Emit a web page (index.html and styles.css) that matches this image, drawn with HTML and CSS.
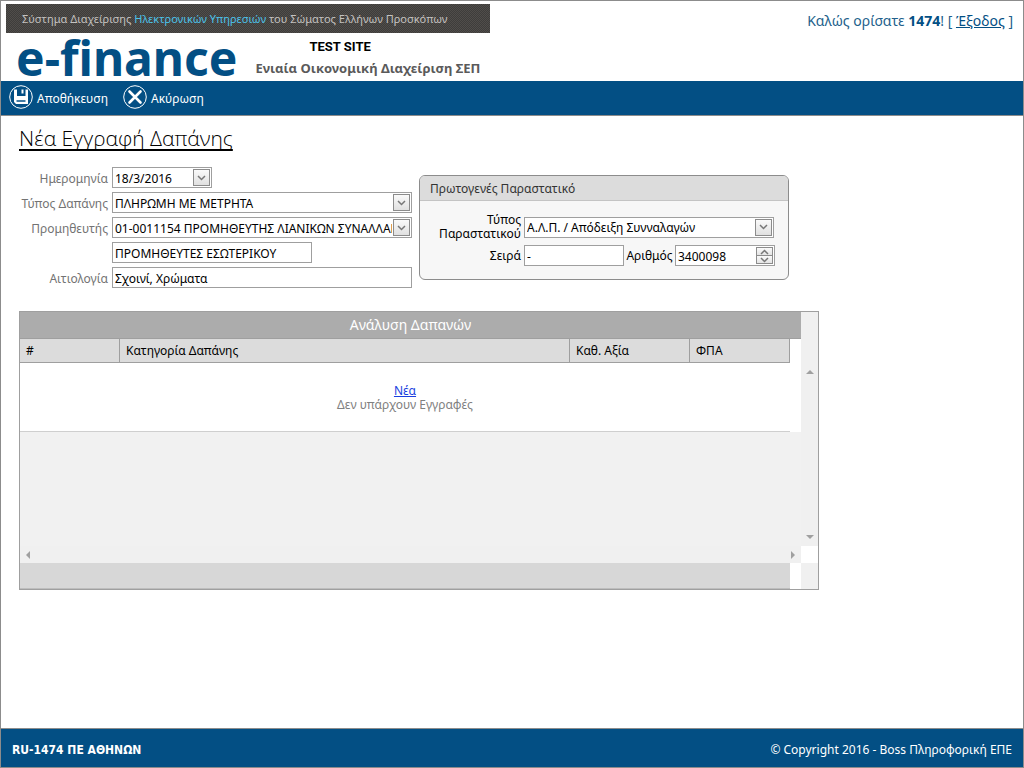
FILE: index.html
```html
<!DOCTYPE html>
<html lang="el">
<head>
<meta charset="utf-8">
<meta name="viewport" content="width=device-width, initial-scale=1">
<title>e-finance</title>
<link rel="stylesheet" href="styles.css">
</head>
<body>
<div class="app">
  <header class="header">
    <div class="brand">
      <div class="strap">Σύστημα Διαχείρισης <span class="strap-accent">Ηλεκτρονικών Υπηρεσιών</span> του Σώματος Ελλήνων Προσκόπων</div>
      <div class="brand-row">
        <div class="logo">e-finance</div>
        <div class="taglines">
          <div class="test-site">TEST SITE</div>
          <div class="tagline">Ενιαία Οικονομική Διαχείριση ΣΕΠ</div>
        </div>
      </div>
    </div>
    <div class="welcome">Καλώς ορίσατε <b>1474</b>! [ <a href="#">Έξοδος</a> ]</div>
  </header>

  <nav class="toolbar">
    <button class="tool" type="button">
      <svg class="tool-icon" viewBox="0 0 24 24"><circle cx="12" cy="12" r="11.3" fill="none" stroke="#fff"/><path d="M5 4.500h3v6.500h8.500V4.500H19V19H7l-2-2z" fill="#fff"/><path d="M12.500 4.500h2v4h-2z" fill="#fff"/><path d="M7.500 16h9" stroke="#034f84" stroke-width="1.500"/></svg>
      <span>Αποθήκευση</span>
    </button>
    <button class="tool" type="button">
      <svg class="tool-icon" viewBox="0 0 24 24"><circle cx="12" cy="12" r="11.3" fill="none" stroke="#fff"/><path d="M6.500 6.500l11 11M17.500 6.500l-11 11" fill="none" stroke="#fff" stroke-width="2.600" stroke-linecap="round"/></svg>
      <span>Ακύρωση</span>
    </button>
  </nav>

  <main class="content">
    <h1 class="title">Νέα Εγγραφή Δαπάνης</h1>
    <form class="forms">
      <div class="fields">
        <label for="date">Ημερομηνία</label>
        <div class="box box-s"><input id="date" type="text" value="18/3/2016"><button class="drop" type="button" aria-label="Ημερολόγιο"><svg viewBox="0 0 9 6"><path d="M1 1l3.500 3.500L8 1"/></svg></button></div>
        <label for="kind">Τύπος Δαπάνης</label>
        <div class="box box-l"><select id="kind"><option>ΠΛΗΡΩΜΗ ΜΕ ΜΕΤΡΗΤΑ</option></select><span class="drop"><svg viewBox="0 0 9 6"><path d="M1 1l3.500 3.500L8 1"/></svg></span></div>
        <label for="supplier">Προμηθευτής</label>
        <div class="box box-l"><select id="supplier"><option>01-0011154 ΠΡΟΜΗΘΕΥΤΗΣ ΛΙΑΝΙΚΩΝ ΣΥΝΑΛΛΑΓΩΝ</option></select><span class="drop"><svg viewBox="0 0 9 6"><path d="M1 1l3.500 3.500L8 1"/></svg></span></div>
        <div class="box box-m second"><input type="text" aria-label="Κατηγορία προμηθευτή" value="ΠΡΟΜΗΘΕΥΤΕΣ ΕΣΩΤΕΡΙΚΟΥ"></div>
        <label for="reason">Αιτιολογία</label>
        <div class="box box-l"><input id="reason" type="text" value="Σχοινί, Χρώματα"></div>
      </div>

      <section class="panel">
        <h2 class="panel-title">Πρωτογενές Παραστατικό</h2>
        <div class="panel-body">
          <label for="doc">Τύπος Παραστατικού</label>
          <div class="box wide"><select id="doc"><option>Α.Λ.Π. / Απόδειξη Συνναλαγών</option></select><span class="drop"><svg viewBox="0 0 9 6"><path d="M1 1l3.500 3.500L8 1"/></svg></span></div>
          <label for="series">Σειρά</label>
          <div class="pair">
            <div class="box box-s"><input id="series" type="text" value="-"></div>
            <label for="number">Αριθμός</label>
            <div class="box box-s"><input id="number" type="text" value="3400098"><span class="spin"><button type="button" aria-label="Αύξηση"><svg viewBox="0 0 9 6"><path d="M1 5l3.500-3.500L8 5"/></svg></button><button type="button" aria-label="Μείωση"><svg viewBox="0 0 9 6"><path d="M1 1l3.500 3.500L8 1"/></svg></button></span></div>
          </div>
        </div>
      </section>
    </form>

    <section class="grid">
      <div class="grid-title">Ανάλυση Δαπανών</div>
      <div class="grid-main">
        <table class="table">
          <thead><tr><th class="c-num">#</th><th>Κατηγορία Δαπάνης</th><th class="c-val">Καθ. Αξία</th><th class="c-vat">ΦΠΑ</th></tr></thead>
          <tbody><tr><td colspan="4"><a href="#">Νέα</a><br>Δεν υπάρχουν Εγγραφές</td></tr></tbody>
        </table>
      </div>
      <div class="hscroll"><i class="arrow left"></i><i class="arrow right"></i></div>
      <div class="grid-foot"><div class="grid-sum"></div></div>
      <div class="vscroll"><i class="arrow up"></i><i class="arrow down"></i></div>
      <div class="corner"></div>
    </section>
  </main>

  <footer class="footer"><b>RU-1474 ΠΕ ΑΘΗΝΩΝ</b><span>© Copyright 2016 - Boss Πληροφορική ΕΠΕ</span></footer>
</div>
</body>
</html>
```
FILE: styles.css
```css
* { box-sizing: border-box; }
body { margin: 0; font: 12px/14px "Noto Sans", sans-serif; color: #000; background: #fff; }
button, input, select { font: inherit; color: inherit; }
.app { min-height: 100vh; display: flex; flex-direction: column; border: 1px solid #8c8c8c; }

.header { display: flex; justify-content: space-between; height: 80px; padding: 3px 10px 0 5px; }
.brand { width: 484px; }
.strap { height: 29px; padding-left: 16px; font-size: 11px; line-height: 30px; white-space: nowrap; color: #c4c2c0; background: repeating-conic-gradient(#3e3d3b 0 25%, #504d4a 0 50%) 0 0 / 2px 2px; }
.strap-accent { color: #4cc3ea; }
.brand-row { display: flex; gap: 18px; padding-left: 10px; }
.logo { font-size: 48px; line-height: 50px; font-weight: 700; color: #034f84; }
.taglines { padding-top: 6px; white-space: nowrap; }
.test-site { padding-left: 54px; font: 700 13px/15px Roboto, sans-serif; }
.tagline { padding-top: 5px; font-size: 13px; line-height: 18px; font-weight: 700; color: #5a5a5a; }
.welcome { padding-top: 8px; font-size: 14px; line-height: 18px; color: #235f8b; }
.welcome b, .welcome a { color: #034f84; }

.toolbar { display: flex; gap: 15px; height: 35px; padding-left: 8px; background: #034f84; border-bottom: 1px solid #8c8c8c; }
.tool { display: flex; align-items: center; gap: 4px; padding: 0; border: 0; background: none; color: #fff; }
.tool span { padding-top: 1px; }
.tool-icon { width: 24px; height: 24px; margin-bottom: 2px; }

.content { flex: 1; padding: 8px 18px; }
.title { margin: 0; font: 300 21px/28px "Open Sans", sans-serif; text-decoration: underline; text-underline-offset: 3px; text-decoration-thickness: 2px; text-decoration-skip-ink: none; }
.forms { display: flex; align-items: flex-start; gap: 7px; padding-top: 15px; }
.fields { display: grid; grid-template-columns: 90px 300px; gap: 4px 3px; align-items: center; color: #737373; }
.fields label { padding: 2px 1px 0 0; text-align: right; white-space: nowrap; }
.second { grid-column: 2; }
.box { display: flex; height: 21px; color: #000; background: #fff; border: 1px solid #9f9f9f; }
.box input, .box select { flex: 1; min-width: 0; width: 0; padding: 2px 0 0 2px; border: 0; outline: 0; background: none; appearance: none; }
.box-s { width: 100px; }
.box-m { width: 200px; }
.box-l { width: 300px; }
.drop { display: flex; align-items: center; justify-content: center; width: 17px; margin: 1px; padding: 0; border: 1px solid #8c8c8c; background: linear-gradient(#fafafa, #e0e0e0); pointer-events: none; }
.drop svg, .spin svg { width: 9px; height: 6px; fill: none; stroke: #777; stroke-width: 1.5; }
.spin { display: flex; flex-direction: column; width: 17px; margin: 1px; border: 1px solid #8c8c8c; }
.spin button { flex: 1; display: flex; align-items: center; justify-content: center; min-height: 0; padding: 0; border: 0; background: linear-gradient(#fafafa, #e4e4e4); }
.spin button + button { border-top: 1px solid #8c8c8c; }

.panel { width: 370px; margin-top: 8px; border: 1px solid #8c8c8c; border-radius: 6px; background: #f7f7f7; overflow: hidden; }
.panel-title { margin: 0; padding: 1px 10px 0; font-size: 12px; font-weight: 400; line-height: 23px; color: #333; background: #dcdcdc; border-bottom: 1px solid #c4c4c4; }
.panel-body { display: grid; grid-template-columns: 86px 251px; gap: 4px 3px; align-items: center; padding: 12px 0 13px 15px; }
.panel-body label { text-align: right; }
.wide { width: 250px; }
.pair { display: flex; align-items: center; justify-content: space-between; }

.grid { display: grid; grid-template-columns: 1fr 17px; grid-template-rows: 27px 207px 17px 26px; max-width: 800px; margin-top: 23px; border: 1px solid #9f9f9f; background: #fff; }
.grid-title, .grid-main, .hscroll, .grid-foot { grid-column: 1; }
.grid-title { font-size: 14px; line-height: 26px; text-align: center; color: #fff; background: #acacac; border-bottom: 1px solid #9f9f9f; }
.grid-main { background: linear-gradient(#fff 93px, #f1f1f1 93px); }
.table { width: calc(100% - 11px); table-layout: fixed; border-collapse: separate; border-spacing: 0; }
.table th { height: 24px; padding: 0 6px; font-weight: 400; text-align: left; background: #dcdcdc; border: solid #9f9f9f; border-width: 0 1px 1px 0; }
.table td { height: 69px; padding: 2px 0 0; text-align: center; color: #808080; background: #fff; border-bottom: 1px solid #cfcfcf; }
.table a { color: #1a3fe0; }
.c-num { width: 100px; }
.c-val { width: 120px; }
.c-vat { width: 100px; }
.hscroll { display: flex; align-items: center; justify-content: space-between; padding: 0 6px; background: #f0f0f0; }
.grid-foot { grid-row: 4; padding-right: 11px; }
.grid-sum { height: 26px; background: #d7d7d7; border-bottom: 1px solid #bdbdbd; }
.vscroll { grid-column: 2; grid-row: 1 / 3; display: flex; flex-direction: column; align-items: center; justify-content: space-between; padding: 58px 0 7px; background: #f0f0f0; }
.corner { grid-column: 2; grid-row: 4; background: #f0f0f0; }
.arrow { width: 0; height: 0; border: 4px solid transparent; }
.up { border-top: 0; border-bottom-color: #a0a0a0; }
.down { border-bottom: 0; border-top-color: #a0a0a0; }
.left { border-left: 0; border-right-color: #a0a0a0; }
.right { border-right: 0; border-left-color: #a0a0a0; }

.footer { display: flex; align-items: center; justify-content: space-between; height: 39px; padding: 3px 11px 0; color: #fff; background: #034f84; border-top: 1px solid #8c8c8c; }
.footer b { font-family: "DejaVu Sans Condensed", "DejaVu Sans", sans-serif; }
```
